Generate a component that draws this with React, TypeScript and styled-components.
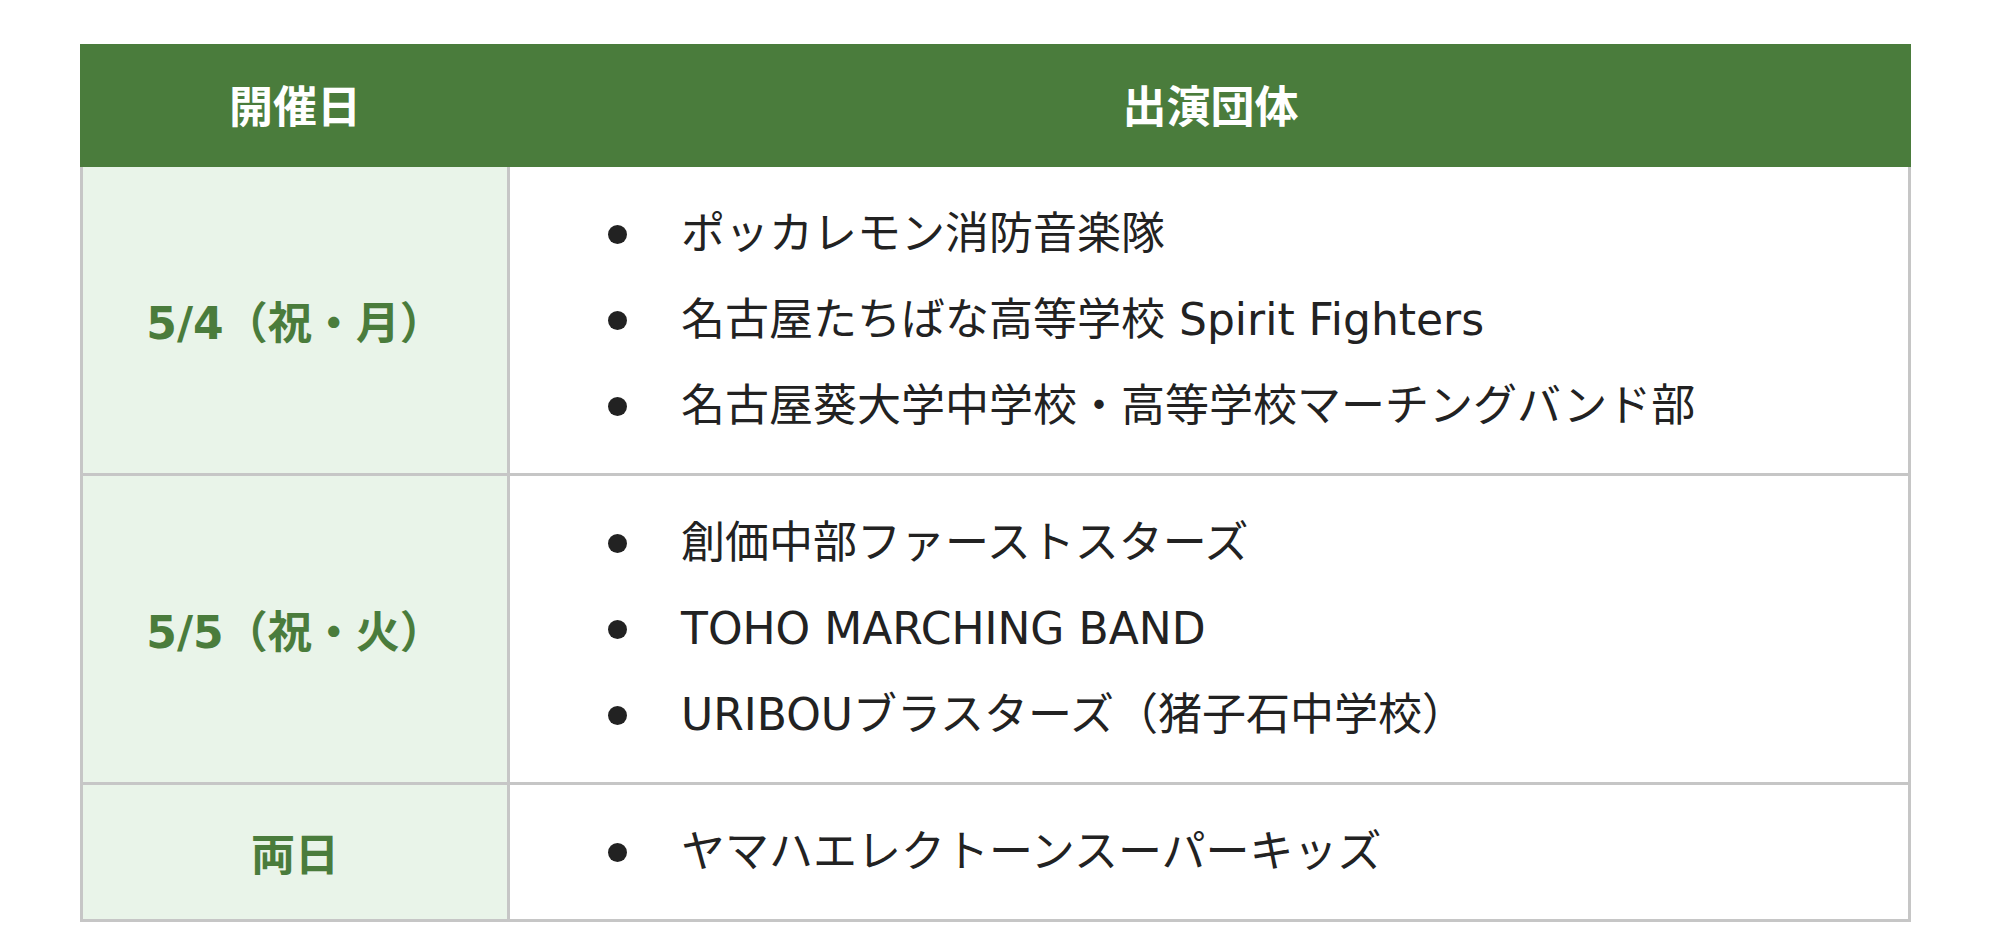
import React from 'react'
import styled, { createGlobalStyle } from 'styled-components'

const GlobalStyle = createGlobalStyle`
  body {
    margin: 0;
    background: #ffffff;
    font-family: 'DejaVu Sans', 'Noto Sans CJK JP', sans-serif;
    color: #222222;
  }
`

interface Schedule {
  date: string
  groups: string[]
}

const schedules: Schedule[] = [
  {
    date: '5/4（祝・月）',
    groups: [
      'ポッカレモン消防音楽隊',
      '名古屋たちばな高等学校 Spirit Fighters',
      '名古屋葵大学中学校・高等学校マーチングバンド部',
    ],
  },
  {
    date: '5/5（祝・火）',
    groups: [
      '創価中部ファーストスターズ',
      'TOHO MARCHING BAND',
      'URIBOUブラスターズ（猪子石中学校）',
    ],
  },
  {
    date: '両日',
    groups: ['ヤマハエレクトーンスーパーキッズ'],
  },
]

const App: React.FC = () => {
  return (
    <>
      <GlobalStyle />
      <Page>
        <ScheduleTable>
          <thead>
            <tr>
              <HeadCell $width={430}>開催日</HeadCell>
              <HeadCell>出演団体</HeadCell>
            </tr>
          </thead>
          <tbody>
            {schedules.map((schedule) => (
              <tr key={schedule.date}>
                <DateCell>{schedule.date}</DateCell>
                <GroupCell>
                  <GroupList>
                    {schedule.groups.map((group) => (
                      <GroupItem key={group}>{group}</GroupItem>
                    ))}
                  </GroupList>
                </GroupCell>
              </tr>
            ))}
          </tbody>
        </ScheduleTable>
      </Page>
    </>
  )
}

export default App

const green = '#4a7c3c'
const rule = '3px solid #c6c6c6'

const Page = styled.div`
  padding: 44px 0 0 80px;
`

const ScheduleTable = styled.table`
  width: 1831px;
  table-layout: fixed;
  border-collapse: separate;
  border-spacing: 0;
`

const HeadCell = styled.th<{ $width?: number }>`
  width: ${(props) => (props.$width ? `${props.$width}px` : 'auto')};
  height: 119px;
  padding: 0 0 4px;
  background: ${green};
  color: #ffffff;
  font-size: 44px;
  font-weight: 700;
  text-align: center;
  vertical-align: middle;
`

const DateCell = styled.td`
  padding: 0;
  background: #e9f4e9;
  border-left: ${rule};
  border-right: ${rule};
  border-bottom: ${rule};
  color: ${green};
  font-size: 44px;
  font-weight: 700;
  text-align: center;
  vertical-align: middle;
`

const GroupCell = styled.td`
  padding: 24px 0 24px 98px;
  background: #ffffff;
  border-right: ${rule};
  border-bottom: ${rule};
  vertical-align: middle;
`

const GroupList = styled.ul`
  margin: 0;
  padding: 0;
  list-style: none;
`

const GroupItem = styled.li`
  display: flex;
  align-items: center;
  height: 86px;
  font-size: 44px;
  line-height: 86px;
  color: #222222;
  white-space: nowrap;

  &::before {
    content: '';
    flex-shrink: 0;
    width: 19px;
    height: 19px;
    margin-right: 54px;
    border-radius: 50%;
    background: #222222;
  }
`
